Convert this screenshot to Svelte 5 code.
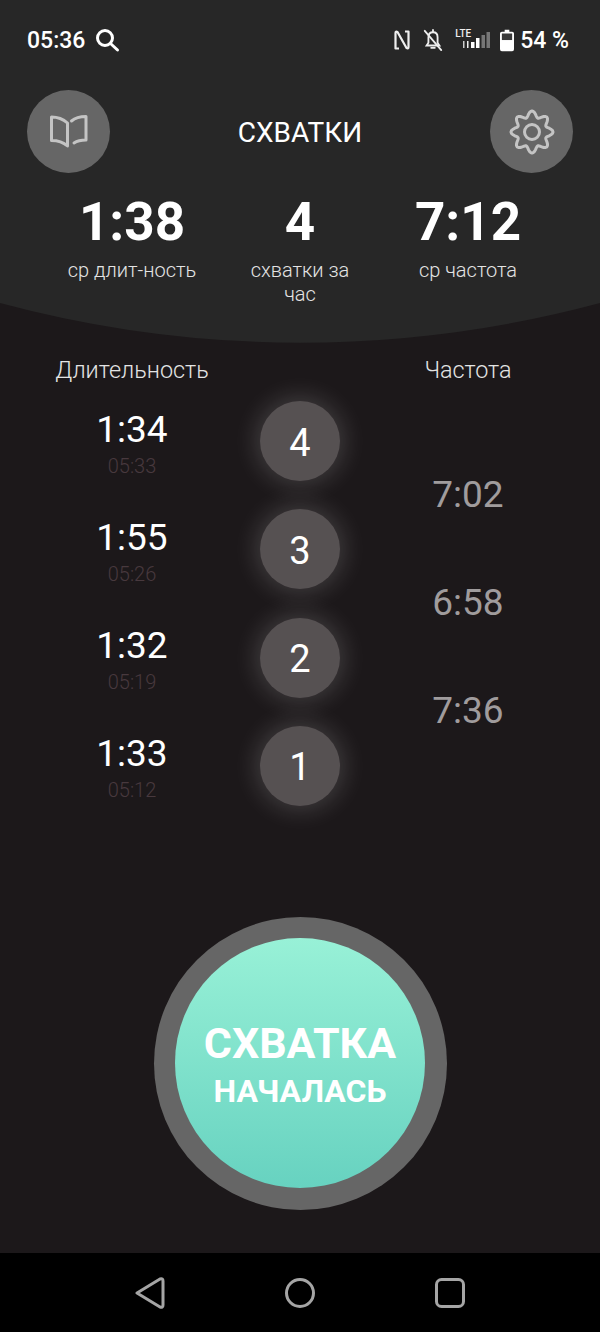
<script>
  const rows = [
    { dur: '1:34', at: '05:33', n: 4 },
    { dur: '1:55', at: '05:26', n: 3 },
    { dur: '1:32', at: '05:19', n: 2 },
    { dur: '1:33', at: '05:12', n: 1 }
  ];
  const freqs = ['7:02', '6:58', '7:36'];

  // шестерёнка: 8 скруглённых зубцов
  let gear = '';
  for (let i = 0; i < 96; i++) {
    const a = (i / 96) * Math.PI * 2 - Math.PI / 2;
    const r = 18 + 3 * Math.cos(8 * (a + Math.PI / 2));
    gear += (i ? 'L' : 'M') + (23 + r * Math.cos(a)).toFixed(2) + ' ' + (23 + r * Math.sin(a)).toFixed(2);
  }
  gear += 'Z';
</script>

<div class="screen">
  <header class="head">
    <div class="status">
      <div class="status-left">
        <span class="clock">05:36</span>
        <svg width="26" height="26" viewBox="0 0 26 26" fill="none" stroke="#fff" stroke-width="3" stroke-linecap="round">
          <circle cx="11" cy="11" r="7.5" />
          <path d="M16.5 16.5 L23.5 23" />
        </svg>
      </div>
      <div class="status-right">
        <svg class="nfc" width="16" height="20" viewBox="0 0 16 20" fill="none" stroke="#eee" stroke-width="2.2" stroke-linejoin="round">
          <path d="M5 18.500 H1.500 V3 Q1.500 1 3.500 2 L12.500 18 Q14.500 19 14.500 17 V1.500 H11" />
        </svg>
        <svg class="bell" width="22" height="26" viewBox="0 0 24 26" fill="none" stroke="#eee" stroke-width="2" stroke-linecap="round">
          <path d="M5 19 H19 L17 16 V10 C17 6 15 4.500 12 4.500 C9 4.500 7 6 7 10 V16 Z" />
          <path d="M12 2 V4 M10 21.500 H14" />
          <path d="M3 3 L21 24" />
        </svg>
        <div class="net">
          <span class="lte">LTE</span>
          <svg width="35" height="16" viewBox="0 0 35 16">
            <rect x="8" y="9" width="1.500" height="7" fill="#ccc" />
            <rect x="12" y="9" width="1.500" height="7" fill="#eee" />
            <rect x="16" y="10" width="3.500" height="6" fill="#fff" />
            <rect x="21" y="6" width="3.500" height="10" fill="#fff" />
            <rect x="26.500" y="3" width="3.500" height="13" fill="#777" />
            <rect x="31.500" y="0" width="3.500" height="16" fill="#777" />
          </svg>
        </div>
        <svg class="cell" width="14" height="23" viewBox="0 0 15 23">
          <path d="M5 0 H10 V2 H13 Q15 2 15 4 V21 Q15 23 13 23 H2 Q0 23 0 21 V4 Q0 2 2 2 H5 Z" fill="#fff" />
          <rect x="2" y="4" width="11" height="7" fill="#3a3a3a" />
        </svg>
        <span class="batt">54 %</span>
      </div>
    </div>

    <div class="topbar">
      <button class="round" aria-label="book">
        <svg width="38" height="33" viewBox="0 0 38 33" fill="none" stroke="#c4c4c4" stroke-width="3" stroke-linejoin="round" stroke-linecap="round">
          <path d="M1.500 2 C8 2 13 4 17.500 8 V31 C13 27 7 25.500 1.500 25.500 Z" />
          <path d="M21.500 6 C25 3 30 1.500 36 1.500 V25 C31 25 27 26 24 28" />
        </svg>
      </button>
      <h1>СХВАТКИ</h1>
      <button class="round" aria-label="settings">
        <svg width="46" height="46" viewBox="0 0 46 46" fill="none" stroke="#c4c4c4" stroke-width="3" stroke-linejoin="round">
          <path d={gear} />
          <circle cx="23" cy="23" r="7.500" />
        </svg>
      </button>
    </div>

    <div class="stats">
      <div class="stat"><b>1:38</b><span>ср длит-ность</span></div>
      <div class="stat"><b>4</b><span class="narrow">схватки за час</span></div>
      <div class="stat"><b>7:12</b><span>ср частота</span></div>
    </div>
  </header>
  <svg class="curve" width="600" height="40" viewBox="0 0 600 40">
    <path d="M0 0 H600 A1154 1154 0 0 1 0 0 Z" fill="#272727" />
  </svg>

  <main class="main">
    <div class="table">
      <div class="col">
        <div class="col-title">Длительность</div>
        {#each rows as r}
          <div class="dur-item">
            <div class="dur">{r.dur}</div>
            <div class="at">{r.at}</div>
          </div>
        {/each}
      </div>
      <div class="col mid">
        {#each rows as r}
          <div class="num">{r.n}</div>
        {/each}
      </div>
      <div class="col">
        <div class="col-title">Частота</div>
        <div class="freqs">
          {#each freqs as f}
            <div class="freq">{f}</div>
          {/each}
        </div>
      </div>
    </div>

    <div class="start-wrap">
      <button class="start">
        <span class="start-inner">
          <span class="big">СХВАТКА</span>
          <span class="small">НАЧАЛАСЬ</span>
        </span>
      </button>
    </div>
  </main>

  <nav class="nav">
    <svg width="30" height="34" viewBox="0 0 30 34" fill="none" stroke="#a5a5a5" stroke-width="3" stroke-linejoin="round">
      <path d="M2 17 L25 3 Q28 2 28 5 V29 Q28 32 25 31 Z" />
    </svg>
    <svg width="30" height="30" viewBox="0 0 30 30" fill="none" stroke="#a5a5a5" stroke-width="3">
      <circle cx="15" cy="15" r="13.500" />
    </svg>
    <svg width="30" height="30" viewBox="0 0 30 30" fill="none" stroke="#a5a5a5" stroke-width="3">
      <rect x="1.500" y="1.500" width="27" height="27" rx="5" />
    </svg>
  </nav>
</div>

<style>
:global(body) {
  margin: 0;
  background: #1c181a;
}
.screen {
  width: 600px;
  height: 1332px;
  display: flex;
  flex-direction: column;
  background: #1c181a;
  color: #fff;
  font-family: Roboto, "Noto Sans", sans-serif;
  overflow: hidden;
}
.head {
  height: 303px;
  background: #272727;
  box-sizing: border-box;
  padding-top: 26px;
}
.curve {
  display: block;
  flex: none;
}
.status {
  display: flex;
  justify-content: space-between;
  align-items: center;
  height: 28px;
  padding: 0 31px 0 27px;
}
.status-left {
  display: flex;
  align-items: center;
  gap: 9px;
}
.clock {
  font-size: 23px;
  font-weight: 500;
}
.status-right {
  display: flex;
  align-items: center;
}
.bell {
  margin-left: 12px;
}
.net {
  position: relative;
  margin-left: 11px;
  box-sizing: border-box;
  width: 35px;
  height: 22px;
  padding-bottom: 3px;
  display: flex;
  justify-content: flex-end;
  align-items: flex-end;
}
.lte {
  position: absolute;
  left: 0;
  top: -1px;
  font-size: 10px;
  font-weight: 500;
  color: #eee;
}
.cell {
  margin-left: 10px;
}
.batt {
  margin-left: 6px;
  font-size: 23px;
  font-weight: 500;
}
.topbar {
  display: flex;
  justify-content: space-between;
  align-items: center;
  margin-top: 36px;
  padding: 0 27px;
}
.round {
  width: 83px;
  height: 83px;
  border: none;
  border-radius: 50%;
  background: #666;
  padding: 0;
  display: flex;
  align-items: center;
  justify-content: center;
}
h1 {
  margin: 2px 0 0;
  font-size: 28px;
  font-weight: 400;
  color: #fff;
}
.stats {
  display: grid;
  grid-template-columns: repeat(3, 168px);
  justify-content: center;
  margin-top: 17px;
  text-align: center;
}
.stat {
  display: flex;
  flex-direction: column;
  align-items: center;
}
.stat b {
  font-size: 53px;
  line-height: 64px;
  font-weight: 700;
}
.stat span {
  width: 150px;
  font-size: 20px;
  line-height: 24px;
  font-weight: 300;
  color: #e4e4e4;
  margin-top: 4px;
}
.stat span.narrow {
  width: 110px;
}
.main {
  flex: 1;
  display: flex;
  flex-direction: column;
}
.table {
  display: grid;
  grid-template-columns: repeat(3, 168px);
  justify-content: center;
  height: 534px;
  text-align: center;
}
.col-title {
  font-size: 23.4px;
  font-weight: 300;
  line-height: 28px;
  color: #e4e4e4;
  margin-top: 13px;
}
.dur-item {
  height: 108.3px;
}
.col-title + .dur-item {
  margin-top: 22.5px;
}
.dur {
  font-size: 37px;
  line-height: 46px;
  font-weight: 400;
}
.at {
  font-size: 20px;
  line-height: 26px;
  font-weight: 300;
  color: #48393e;
}
.mid {
  display: flex;
  flex-direction: column;
  align-items: center;
  padding-top: 58px;
  gap: 28.3px;
}
.num {
  flex: none;
  box-sizing: border-box;
  width: 80px;
  height: 80px;
  padding-top: 3px;
  border-radius: 50%;
  background: #565152;
  box-shadow: 0 0 24px 4px rgba(255, 255, 255, 0.17);
  display: flex;
  align-items: center;
  justify-content: center;
  font-size: 38px;
  font-weight: 400;
}
.freqs {
  margin-top: 56.5px;
}
.freq {
  height: 108.3px;
  font-size: 37px;
  line-height: 108px;
  font-weight: 400;
  color: #a09c9d;
}
.start-wrap {
  flex: 1;
  display: flex;
  justify-content: center;
  padding-top: 40px;
}
.start {
  width: 293px;
  height: 293px;
  border: none;
  border-radius: 50%;
  background: #666;
  padding: 0;
  display: flex;
  align-items: center;
  justify-content: center;
  font-family: inherit;
}
.start-inner {
  box-sizing: border-box;
  width: 250px;
  height: 250px;
  margin-top: -1px;
  padding-top: 2px;
  border-radius: 50%;
  background: linear-gradient(#98f1d7, #67d2c0);
  color: #fff;
  display: flex;
  flex-direction: column;
  align-items: center;
  justify-content: center;
}
.big {
  font-size: 43px;
  line-height: 52px;
  margin-top: 2px;
  font-weight: 700;
}
.small {
  font-size: 32px;
  line-height: 44px;
  font-weight: 700;
}
.nav {
  height: 79px;
  flex: none;
  background: #000;
  display: flex;
  justify-content: center;
  align-items: center;
  gap: 120px;
}
</style>
